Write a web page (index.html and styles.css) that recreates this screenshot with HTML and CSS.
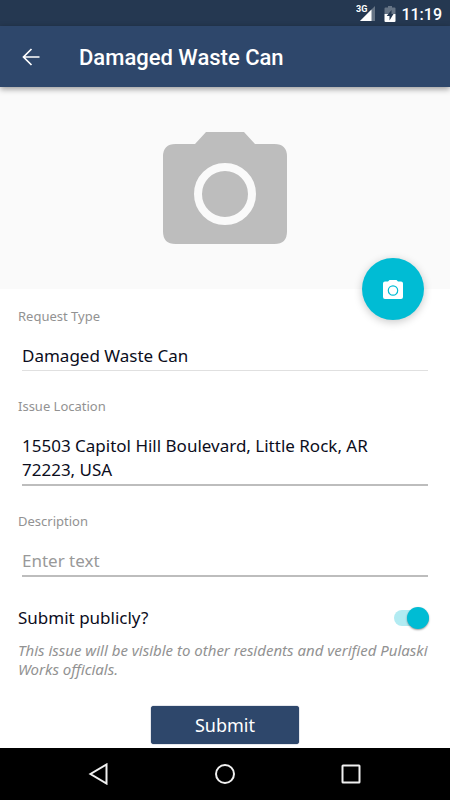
FILE: index.html
```html
<!DOCTYPE html>
<html lang="en">
<head>
<meta charset="utf-8">
<meta name="viewport" content="width=device-width, initial-scale=1">
<title>Damaged Waste Can</title>
<link rel="stylesheet" href="styles.css">
</head>
<body>
<div class="status">
  <svg class="signal" width="20" height="18" viewBox="0 0 20 18" aria-hidden="true">
    <path d="M19 2v15H4z" fill="#fff" fill-opacity=".3"/>
    <path d="M15.500 5.500V17H4z" fill="#fff"/>
    <text x="0" y="8" class="network">3G</text>
  </svg>
  <svg class="battery" width="12" height="16" viewBox="0 0 12 16" aria-hidden="true">
    <path d="M1.500 1.500H4V0h4v1.500h2.500Q11.500 1.500 11.500 2.500V8H.5V2.500Q.5 1.500 1.500 1.500z" fill="#fff" fill-opacity=".3"/>
    <path d="M.5 8h11v7q0 1-1 1h-9q-1 0-1-1z" fill="#fff"/>
    <path d="M7.500 4L2.700 10H5.500v4.500L9.500 8H7.500z" fill="#253851"/>
  </svg>
  <span class="clock">11:19</span>
</div>
<header class="toolbar">
  <button class="back" type="button" aria-label="Back">
    <svg width="18" height="18" viewBox="0 0 18 18" fill="none" stroke="#fff" stroke-width="1.700"><path d="M17.500 9H1.500M9.500 1L1.500 9l8 8"/></svg>
  </button>
  <h1>Damaged Waste Can</h1>
</header>
<main>
  <div class="photo">
    <svg width="124" height="112" viewBox="0 0 124 112" aria-hidden="true">
      <path d="M32 12L43 0h38l11 12h19.500Q124 12 124 24.500v75Q124 112 111.500 112h-99Q0 112 0 99.500v-75Q0 12 12.500 12z" fill="#bdbdbd"/>
      <circle cx="62" cy="62" r="27" fill="none" stroke="#fafafa" stroke-width="8"/>
    </svg>
    <button class="fab" type="button" aria-label="Add photo">
      <svg width="20" height="19" viewBox="0 0 20 19">
        <path d="M5 1.500L6.500 0h7L15 1.500h3q2 0 2 2V17q0 2-2 2H2q-2 0-2-2V3.500q0-2 2-2z" fill="#fff"/>
        <circle cx="10" cy="10.500" r="4.700" fill="none" stroke="#00bcd4" stroke-width="1.200"/>
      </svg>
    </button>
  </div>
  <form>
    <div class="field">
      <label for="type">Request Type</label>
      <input id="type" class="box fixed" type="text" value="Damaged Waste Can" readonly>
    </div>
    <div class="field">
      <label for="place">Issue Location</label>
      <textarea id="place" class="box address" rows="2">15503 Capitol Hill Boulevard, Little Rock, AR 72223, USA</textarea>
    </div>
    <div class="field">
      <label for="details">Description</label>
      <input id="details" class="box" type="text" placeholder="Enter text">
    </div>
    <div class="public">
      <label for="public">Submit publicly?</label>
      <input id="public" class="switch" type="checkbox" role="switch" checked>
    </div>
    <p class="hint">This issue will be visible to other residents and verified Pulaski Works officials.</p>
    <button class="submit" type="submit">Submit</button>
  </form>
</main>
<nav class="system">
  <button type="button" aria-label="Back"><svg width="22" height="22" viewBox="0 0 22 22"><path d="M18.500 1.500v19L2.500 11z"/></svg></button>
  <button type="button" aria-label="Home"><svg width="22" height="22" viewBox="0 0 22 22"><circle cx="11" cy="11" r="9"/></svg></button>
  <button type="button" aria-label="Recent apps"><svg width="22" height="22" viewBox="0 0 22 22"><rect x="2.500" y="2.500" width="17" height="17" rx=".5"/></svg></button>
</nav>
</body>
</html>
```
FILE: styles.css
```css
* {
  box-sizing: border-box;
}

body {
  margin: 0;
  min-height: 100vh;
  display: flex;
  flex-direction: column;
  background: #fff;
  color: #0b0d1c;
  font-family: "Noto Sans", "Open Sans", sans-serif;
}

button,
input,
textarea {
  font: inherit;
  color: inherit;
}

button {
  padding: 0;
  border: 0;
  background: none;
  cursor: pointer;
}

svg {
  display: block;
}

.status {
  display: flex;
  align-items: center;
  justify-content: flex-end;
  height: 26px;
  padding: 2px 8px 0;
  background: #253851;
  color: #fff;
  font-family: Roboto, sans-serif;
}

.network {
  fill: #fff;
  stroke: #253851;
  stroke-width: 2px;
  paint-order: stroke;
  font: bold 9px Roboto, sans-serif;
}

.signal {
  margin-top: -2px;
}

.battery {
  margin: 0 5px 0 8px;
}

.clock {
  font-size: 16px;
  font-weight: 500;
}

.toolbar {
  position: relative;
  display: flex;
  align-items: center;
  gap: 39px;
  height: 61px;
  padding: 0 22px;
  background: #2e476b;
  color: #fff;
  box-shadow: 0 2px 6px rgba(0, 0, 0, 0.4);
  z-index: 1;
}

h1 {
  margin: 0;
  padding-top: 2px;
  font: 500 22px/30px Roboto, sans-serif;
}

main {
  flex: 1;
}

.photo {
  position: relative;
  display: flex;
  align-items: center;
  justify-content: center;
  height: 202px;
  background: #fafafa;
}

.fab {
  position: absolute;
  right: 26px;
  bottom: -31px;
  display: grid;
  place-items: center;
  width: 62px;
  height: 62px;
  border-radius: 50%;
  background: #00bcd4;
  box-shadow: 0 2px 8px rgba(0, 0, 0, 0.22);
}

form {
  display: flex;
  flex-direction: column;
  padding: 18px 18px 4px;
}

.field {
  display: flex;
  flex-direction: column;
  gap: 19px;
  margin-bottom: 26px;
}

.field label {
  color: #929292;
  font-size: 13px;
  line-height: 18px;
}

.box {
  display: block;
  margin: 0 4px;
  padding: 0 0 2px;
  border: 0;
  border-bottom: 2px solid #bdbdbd;
  border-radius: 0;
  background: none;
  outline: 0;
  resize: none;
  overflow: hidden;
  font-size: 17px;
  line-height: 24px;
}

.fixed {
  border-bottom: 1px solid #e0e0e0;
}

.address {
  padding-right: 36px;
}

.box::placeholder {
  color: #999;
  opacity: 1;
}

.public {
  display: flex;
  align-items: center;
  justify-content: space-between;
  margin-top: 3px;
  padding-right: 3px;
  font-size: 17px;
  line-height: 24px;
}

.switch {
  appearance: none;
  display: flex;
  align-items: center;
  justify-content: flex-end;
  width: 35px;
  height: 16px;
  margin: 0;
  border-radius: 8px;
  background: #b2ebf2;
}

.switch::before {
  content: "";
  width: 22px;
  height: 22px;
  flex: none;
  border-radius: 50%;
  background: #00bcd4;
  box-shadow: 0 1px 2px rgba(0, 0, 0, 0.4);
}

.hint {
  margin: 11px 0 27px;
  color: #929292;
  font-size: 15px;
  font-style: italic;
  line-height: 19px;
}

.submit {
  align-self: center;
  width: 148px;
  height: 38px;
  border-radius: 3px;
  background: #2e476b;
  box-shadow: 0 0 1px #001848;
  color: #fff;
  font-size: 18px;
}

.system {
  display: grid;
  grid-template-columns: repeat(3, 1fr);
  place-items: center;
  height: 52px;
  padding: 0 36px;
  background: #000;
}

.system svg {
  fill: none;
  stroke: #f0f0f0;
  stroke-width: 2;
}
```
